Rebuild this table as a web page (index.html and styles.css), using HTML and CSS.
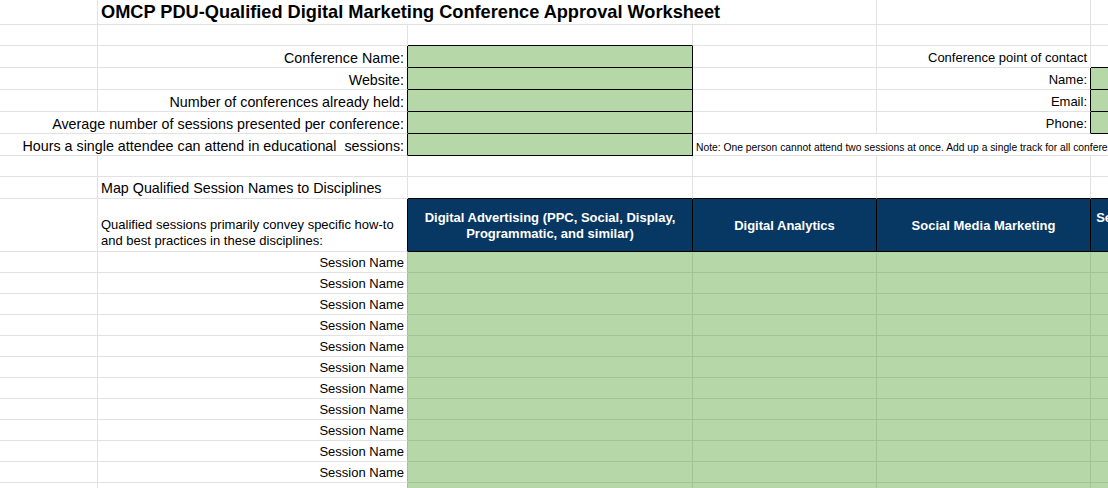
FILE: index.html
```html
<!DOCTYPE html>
<html lang="en">
<head>
<meta charset="utf-8">
<title>OMCP PDU-Qualified Digital Marketing Conference Approval Worksheet</title>
<link rel="stylesheet" href="styles.css">
</head>
<body>
<div class="sheet">
  <!-- row 1 -->
  <div class="c"></div>
  <div class="c title span-bd">OMCP PDU-Qualified Digital Marketing Conference Approval Worksheet</div>
  <div class="c"></div>
  <div class="c"></div>

  <!-- row 2 -->
  <div class="c"></div>
  <div class="c"></div>
  <div class="c bb"></div>
  <div class="c"></div>
  <div class="c"></div>
  <div class="c"></div>

  <!-- row 3 -->
  <div class="c"></div>
  <div class="c lbl r br">Conference Name:</div>
  <div class="c g bx"></div>
  <div class="c"></div>
  <div class="c lbl small r">Conference point of contact</div>
  <div class="c bb"></div>

  <!-- row 4 -->
  <div class="c"></div>
  <div class="c lbl r br">Website:</div>
  <div class="c g bx"></div>
  <div class="c"></div>
  <div class="c lbl small r br">Name:</div>
  <div class="c g bx"></div>

  <!-- row 5 -->
  <div class="c"></div>
  <div class="c lbl r br">Number of conferences already held:</div>
  <div class="c g bx"></div>
  <div class="c"></div>
  <div class="c lbl small r br">Email:</div>
  <div class="c g bx"></div>

  <!-- row 6 -->
  <div class="c lbl r br span-ab">Average number of sessions presented per conference:</div>
  <div class="c g bx"></div>
  <div class="c"></div>
  <div class="c lbl small r br">Phone:</div>
  <div class="c g bx"></div>

  <!-- row 7 -->
  <div class="c lbl r br span-ab">Hours a single attendee can attend in educational&nbsp; sessions:</div>
  <div class="c g bx"></div>
  <div class="c note span-df">Note: One person cannot attend two sessions at once. Add up a single track for all conference days to calculate the number of educational hours available to one attendee.</div>

  <!-- row 8 -->
  <div class="c"></div>
  <div class="c"></div>
  <div class="c"></div>
  <div class="c"></div>
  <div class="c"></div>
  <div class="c"></div>

  <!-- row 9 -->
  <div class="c"></div>
  <div class="c lbl sub">Map Qualified Session Names to Disciplines</div>
  <div class="c bb"></div>
  <div class="c bb"></div>
  <div class="c bb"></div>
  <div class="c bb"></div>

  <!-- row 10 -->
  <div class="c"></div>
  <div class="c intro br">Qualified sessions primarily convey specific how-to<br>and best practices in these disciplines:</div>
  <div class="c hd bx">Digital Advertising (PPC, Social, Display, Programmatic, and similar)</div>
  <div class="c hd bx">Digital Analytics</div>
  <div class="c hd bx">Social Media Marketing</div>
  <div class="c hd bx">Search Engine Optimization (SEO, SEM)</div>

  <!-- session rows -->
  <div class="c"></div><div class="c sess r gl">Session Name</div><div class="c g gl"></div><div class="c g gl"></div><div class="c g gl"></div><div class="c g gl"></div>
  <div class="c"></div><div class="c sess r gl">Session Name</div><div class="c g gl"></div><div class="c g gl"></div><div class="c g gl"></div><div class="c g gl"></div>
  <div class="c"></div><div class="c sess r gl">Session Name</div><div class="c g gl"></div><div class="c g gl"></div><div class="c g gl"></div><div class="c g gl"></div>
  <div class="c"></div><div class="c sess r gl">Session Name</div><div class="c g gl"></div><div class="c g gl"></div><div class="c g gl"></div><div class="c g gl"></div>
  <div class="c"></div><div class="c sess r gl">Session Name</div><div class="c g gl"></div><div class="c g gl"></div><div class="c g gl"></div><div class="c g gl"></div>
  <div class="c"></div><div class="c sess r gl">Session Name</div><div class="c g gl"></div><div class="c g gl"></div><div class="c g gl"></div><div class="c g gl"></div>
  <div class="c"></div><div class="c sess r gl">Session Name</div><div class="c g gl"></div><div class="c g gl"></div><div class="c g gl"></div><div class="c g gl"></div>
  <div class="c"></div><div class="c sess r gl">Session Name</div><div class="c g gl"></div><div class="c g gl"></div><div class="c g gl"></div><div class="c g gl"></div>
  <div class="c"></div><div class="c sess r gl">Session Name</div><div class="c g gl"></div><div class="c g gl"></div><div class="c g gl"></div><div class="c g gl"></div>
  <div class="c"></div><div class="c sess r gl">Session Name</div><div class="c g gl"></div><div class="c g gl"></div><div class="c g gl"></div><div class="c g gl"></div>
  <div class="c"></div><div class="c sess r gl">Session Name</div><div class="c g gl"></div><div class="c g gl"></div><div class="c g gl"></div><div class="c g gl"></div>
  <div class="c"></div><div class="c r gl"></div><div class="c g gl"></div><div class="c g gl"></div><div class="c g gl"></div><div class="c g gl"></div>
</div>
</body>
</html>
```
FILE: styles.css
```css
html, body {
  margin: 0;
  padding: 0;
  background: #ffffff;
  overflow: hidden;
}

body {
  width: 1108px;
  height: 488px;
  font-family: "Liberation Sans", Arial, sans-serif;
  color: #000000;
}

.sheet {
  display: grid;
  grid-template-columns: 98px 310px 285px 184px 214px 184px;
  grid-template-rows: 25px 21px 22px 22px 22px 22px 22px 21px 22px 53px repeat(12, 21px);
  width: 1275px;
}

.c {
  box-sizing: border-box;
  border-right: 1px solid #e2e2e2;
  border-bottom: 1px solid #e2e2e2;
  display: flex;
  align-items: flex-end;
  padding: 0 3px 1px 3px;
  overflow: hidden;
  white-space: nowrap;
  min-width: 0;
}

.span-bd { grid-column: 2 / 5; }
.span-ab { grid-column: 1 / 3; }
.span-df { grid-column: 4 / 7; }

.r { justify-content: flex-end; }

.title {
  font-size: 18.2px;
  font-weight: bold;
  line-height: 21px;
  padding-bottom: 1px;
}

.lbl {
  font-size: 14.3px;
  line-height: 16px;
  padding-bottom: 1px;
}

.lbl.small {
  font-size: 13px;
  padding-bottom: 1px;
}

.sub { padding-bottom: 2px; }

.note {
  font-size: 10.3px;
  line-height: 12px;
  padding-bottom: 1px;
}

.intro {
  font-size: 13px;
  line-height: 16px;
  white-space: normal;
  padding-bottom: 2px;
}

.sess {
  font-size: 13px;
  line-height: 15px;
  padding-bottom: 2px;
}

.g { background: #b6d7a8; }

.gl {
  border-right-color: #a3c296;
  border-bottom-color: #a3c296;
}
.sess.gl,
.r.gl { border-bottom-color: #e2e2e2; }

.bx {
  border-right-color: #000000;
  border-bottom-color: #000000;
}
.br { border-right-color: #000000; }
.bb { border-bottom-color: #000000; }

.hd {
  background: #073763;
  color: #ffffff;
  font-size: 13px;
  font-weight: bold;
  line-height: 16px;
  white-space: normal;
  text-align: center;
  align-items: center;
  justify-content: center;
  padding: 1px 4px 0;
}
```
